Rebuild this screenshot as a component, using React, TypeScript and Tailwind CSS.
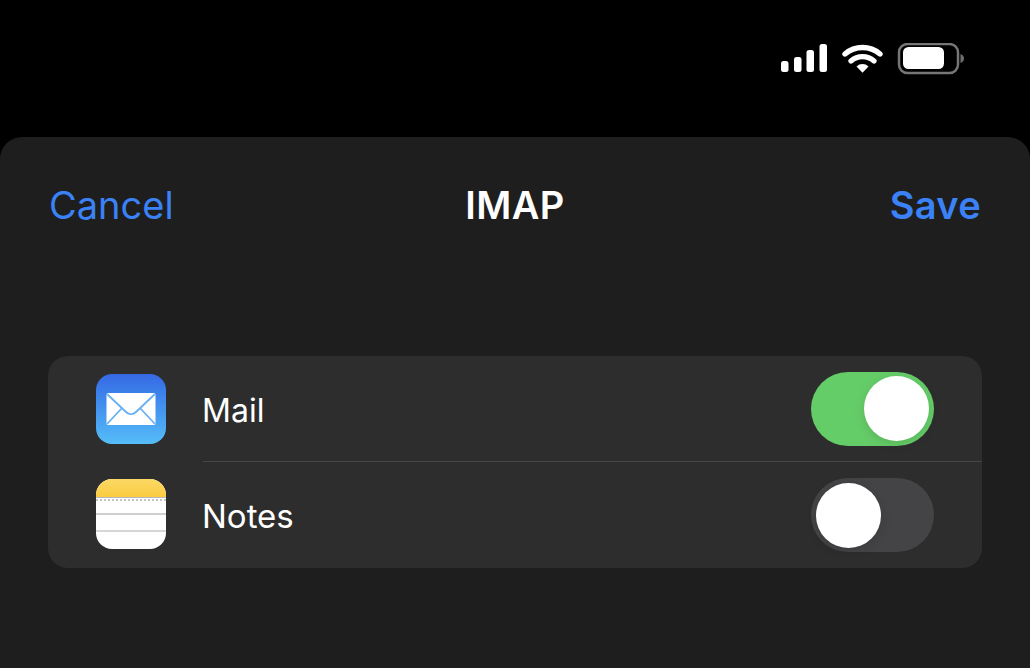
import React from "react";

function StatusIcons() {
  return (
    <svg width="184" height="32" viewBox="0 0 184 32" fill="none">
      {/* signal */}
      <rect x="1" y="18" width="7.500" height="11" rx="2.500" fill="#fff" />
      <rect x="14" y="14" width="7.500" height="15" rx="2.500" fill="#fff" />
      <rect x="26.500" y="7" width="7.500" height="22" rx="2.500" fill="#fff" />
      <rect x="39.500" y="1" width="7.500" height="28" rx="2.500" fill="#fff" />
      {/* wifi */}
      <path d="M65 11a27 27 0 0 1 35 0" stroke="#fff" strokeWidth="5.400" strokeLinecap="round" />
      <path d="M71 18a17.500 17.500 0 0 1 23 0" stroke="#fff" strokeWidth="5.200" strokeLinecap="round" />
      <path d="M76.500 23.600a8.500 8.500 0 0 1 12 0L82.500 29.800Z" fill="#fff" />
      {/* battery */}
      <rect x="119" y="1" width="59" height="29" rx="8.500" stroke="#767676" strokeWidth="2.500" />
      <rect x="123" y="4" width="41" height="22" rx="5.500" fill="#fff" />
      <path d="M180.500 11c2.300.8 3.500 2.300 3.500 4.500s-1.200 3.700-3.500 4.500Z" fill="#6f6f6f" />
    </svg>
  );
}

function MailIcon() {
  return (
    <div className="w-[70px] h-[70px] rounded-[16px] bg-gradient-to-b from-[#3668e4] to-[#56bdf8] flex items-center justify-center shrink-0">
      <svg width="50" height="32" viewBox="0 0 50 32">
        <rect x="0.500" y="0" width="49" height="32" rx="1.500" fill="#fff" />
        <path d="M1 1l19 18c3 2.800 7 2.800 10 0L49 1M1 31l15-16M49 31L34 15" fill="none" stroke="#66b0f3" strokeWidth="1.800" />
      </svg>
    </div>
  );
}

function NotesIcon() {
  return (
    <div className="w-[70px] h-[70px] mb-[2px] rounded-[16px] overflow-hidden bg-white flex flex-col shrink-0">
      <div className="h-[18px] bg-gradient-to-b from-[#fbd964] to-[#fbcb3f]" />
      <div className="h-[1px] bg-[#b9b9b9]" />
      <div className="h-[3px] border-b-2 border-dotted border-[#c4c4c4]" />
      <div className="h-[14px] border-b-2 border-[#cfcfcf]" />
      <div className="h-[17px] border-b-2 border-[#d6d6d6]" />
    </div>
  );
}

function Toggle({ on }: { on: boolean }) {
  return (
    <div className={on
      ? "w-[123px] h-[74px] rounded-full bg-[#65cd68] flex items-center justify-end pr-[5px] shrink-0"
      : "w-[123px] h-[74px] rounded-full bg-[#444446] flex items-center justify-start pl-[5px] shrink-0"}>
      <div className="w-[65px] h-[65px] rounded-full bg-white shadow-[0_3px_12px_rgba(0,0,0,0.12)]" />
    </div>
  );
}

export default function App() {
  return (
    <div className="w-[1030px] h-[668px] bg-black overflow-hidden flex flex-col font-['Inter',sans-serif]">
      <div className="h-[137px] shrink-0 flex justify-end pt-[43px] pr-[66px]">
        <StatusIcons />
      </div>
      <div className="flex-1 bg-[#1e1e1e] rounded-t-[22px] px-[48px]">
        <div className="grid grid-cols-3 items-center h-[136px] px-[1px]">
          <span className="text-[38px] text-[#3a82f6]">Cancel</span>
          <span className="text-[38px] text-white font-semibold text-center tracking-[0.5px]">IMAP</span>
          <span className="text-[38px] text-[#3a82f6] font-semibold text-right tracking-[0.3px]">Save</span>
        </div>
        <div className="mt-[83px] bg-[#2d2d2d] rounded-[20px] h-[212px]">
          <div className="flex items-center h-[106px] pl-[48px]">
            <MailIcon />
            <div className="flex-1 flex items-center justify-between h-full ml-[37px] border-b border-[#464646] pr-[48px]">
              <span className="text-[32px] text-white pt-[4px] -ml-px">Mail</span>
              <Toggle on />
            </div>
          </div>
          <div className="flex items-center h-[106px] pl-[48px]">
            <NotesIcon />
            <div className="flex-1 flex items-center justify-between h-full ml-[37px] pr-[48px]">
              <span className="text-[33px] text-white pt-[4px] -ml-px">Notes</span>
              <Toggle on={false} />
            </div>
          </div>
        </div>
      </div>
    </div>
  );
}
